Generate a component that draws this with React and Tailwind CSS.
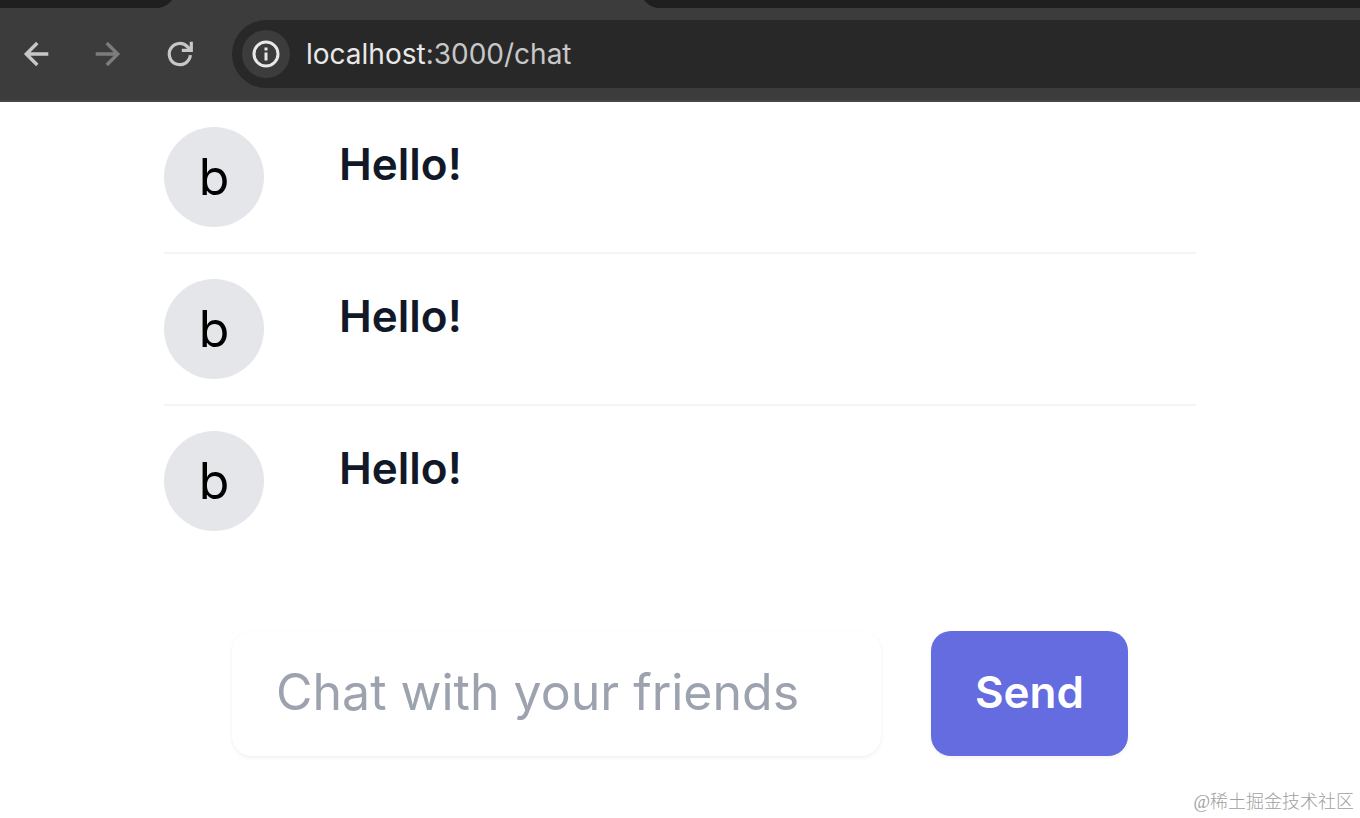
import React, { useState } from 'react';

const initialMessages = [
  { id: 1, user: 'b', text: 'Hello!' },
  { id: 2, user: 'b', text: 'Hello!' },
  { id: 3, user: 'b', text: 'Hello!' },
];

const BrowserBar = () => {
  return (
    <header className="bg-[#3c3c3c] border-b-2 border-[#474547]">
      {/* Bottom edge of the tab strip */}
      <div className="flex items-end h-2 overflow-hidden">
        <div className="w-44 h-10 bg-[#1f1f1f] rounded-br-[20px]" />
        <div className="w-[464px]" />
        <div className="flex-1 h-10 bg-[#1f1f1f] rounded-bl-[20px]" />
      </div>
      <div className="flex items-center pt-3 pb-3">
        <nav className="flex items-center gap-6 pl-3 pr-7">
          <button type="button" aria-label="Back" className="w-12 h-12 flex items-center justify-center text-[#c7c7c7]">
            <svg className="w-6 h-6 overflow-visible" viewBox="0 0 24 24" fill="none" stroke="currentColor" strokeWidth="3.4">
              <path d="M24.3 12H2.5M13.3 1L2.3 12l11 11" />
            </svg>
          </button>
          <button type="button" aria-label="Forward" className="w-12 h-12 flex items-center justify-center text-[#7c7c7c]">
            <svg className="w-6 h-6 overflow-visible" viewBox="0 0 24 24" fill="none" stroke="currentColor" strokeWidth="3.4">
              <path d="M-0.3 12h21.8M10.7 1l11 11-11 11" />
            </svg>
          </button>
          <button type="button" aria-label="Reload" className="w-12 h-12 flex items-center justify-center text-[#c7c7c7]">
            <svg className="w-7 h-7" viewBox="0 0 28 28" fill="none" stroke="currentColor" strokeWidth="3.2">
              <path d="M24.4 15.2A10.6 10.6 0 1 1 21.6 6.8L24.4 9.8" />
              <path d="M25.3 1.8v8.6H15.8" />
            </svg>
          </button>
        </nav>
        <div className="flex-1 flex items-center gap-4 h-[68px] pl-[10px] bg-[#282828] rounded-l-full">
          <button
            type="button"
            aria-label="View site information"
            className="w-12 h-12 rounded-full bg-[#3c3c3c] flex items-center justify-center text-[#e8e8e8]"
          >
            <svg className="w-7 h-7" viewBox="0 0 28 28" fill="none" stroke="currentColor">
              <circle cx="14" cy="14" r="12" strokeWidth="3" />
              <path d="M14 12.4v8.2M14 7.4v3" strokeWidth="3" />
            </svg>
          </button>
          <p className="font-[Inter,sans-serif] text-[28px] leading-9 text-[#c7c7c7]">
            <span className="text-[#e8e8e8]">localhost</span>:3000/chat
          </p>
        </div>
      </div>
    </header>
  );
};

const Message = ({ message }) => {
  return (
    <li className="flex gap-[75px] py-[25px]">
      <div className="w-[100px] h-[100px] shrink-0 rounded-full bg-[#e5e6ea] flex items-center justify-center text-[50px] leading-[75px] text-black">
        {message.user}
      </div>
      <p className="text-[44px] leading-[75px] font-semibold text-[#111827]">{message.text}</p>
    </li>
  );
};

const App = () => {
  const [messages, setMessages] = useState(initialMessages);
  const [text, setText] = useState('');

  const handleSubmit = (e) => {
    e.preventDefault();
    if (!text.trim()) return;
    setMessages((prev) => [...prev, { id: prev.length + 1, user: 'b', text }]);
    setText('');
  };

  return (
    <div className="min-h-screen flex flex-col bg-white font-[Inter,sans-serif]">
      <BrowserBar />
      <main className="px-[164px]">
        <ul className="divide-y-2 divide-[#f3f4f6]">
          {messages.map((message) => (
            <Message key={message.id} message={message} />
          ))}
        </ul>
        <form onSubmit={handleSubmit} className="flex gap-[50px] mt-[75px] px-[68px]">
          <input
            type="text"
            aria-label="Message"
            value={text}
            onChange={(e) => setText(e.target.value)}
            placeholder="Chat with your friends"
            className="flex-1 min-w-0 h-[125px] px-11 pb-[3px] rounded-[20px] text-[50px] text-[#111827] placeholder:text-[#9ca3af] shadow-[0_0_2px_rgba(0,0,0,0.04),0_2px_4px_rgba(0,0,0,0.05)] outline-none"
          />
          <button
            type="submit"
            className="h-[125px] px-11 pb-[3px] rounded-[20px] bg-[#646cdf] text-[44px] font-semibold text-white shadow-[0_2px_4px_rgba(0,0,0,0.05)]"
          >
            Send
          </button>
        </form>
      </main>
      <footer className="mt-auto pr-[6px] pb-1 text-right font-['Liberation_Serif','Noto_Sans_CJK_SC',serif] text-[18px] leading-6 font-light text-[#a0a0a0]">
        @稀土掘金技术社区
      </footer>
    </div>
  );
};

export default App;
